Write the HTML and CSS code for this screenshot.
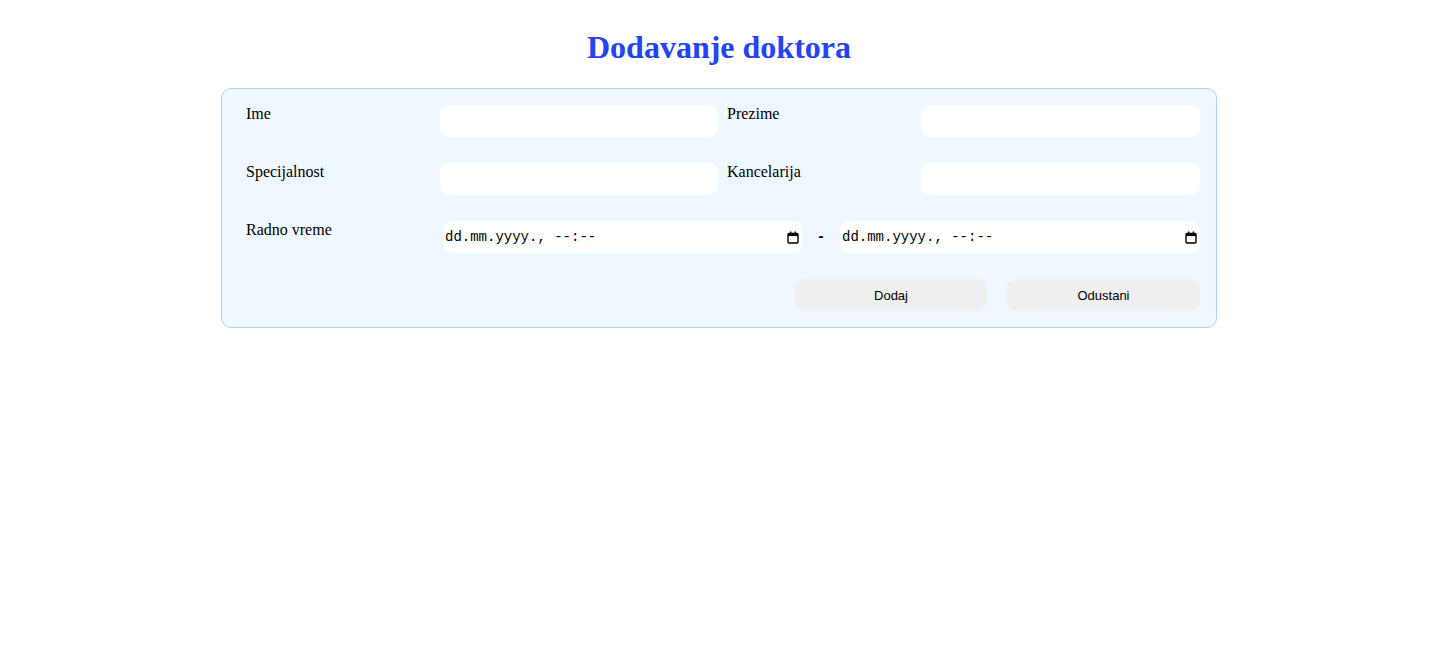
FILE: index.html
```html
<!DOCTYPE html>
<html lang="sr">
<head>
<meta charset="utf-8">
<title>Dodavanje doktora</title>
<link rel="stylesheet" href="styles.css">
</head>
<body>
<h1 class="title">Dodavanje doktora</h1>
<form class="card">
  <div class="grid">
    <label class="lbl" for="ime">Ime</label>
    <input class="field" id="ime" type="text">
    <label class="lbl" for="prezime">Prezime</label>
    <input class="field" id="prezime" type="text">

    <label class="lbl" for="spec">Specijalnost</label>
    <input class="field" id="spec" type="text">
    <label class="lbl" for="kanc">Kancelarija</label>
    <input class="field" id="kanc" type="text">

    <span class="lbl">Radno vreme</span>
    <div class="range">
      <div class="dt dt-first">
        <span class="dt-text">dd.mm.yyyy., --:--</span>
        <svg class="cal" width="12" height="13" viewBox="0 0 12 13" aria-hidden="true">
          <rect x="1" y="2.5" width="10" height="9.5" rx="1" fill="none" stroke="#000" stroke-width="1.4"/>
          <rect x="1" y="2.5" width="10" height="2.6" fill="#000"/>
          <rect x="3" y="0.5" width="1.4" height="2.5" fill="#000"/>
          <rect x="7.6" y="0.5" width="1.4" height="2.5" fill="#000"/>
        </svg>
      </div>
      <span class="dash">-</span>
      <div class="dt dt-second">
        <span class="dt-text">dd.mm.yyyy., --:--</span>
        <svg class="cal" width="12" height="13" viewBox="0 0 12 13" aria-hidden="true">
          <rect x="1" y="2.5" width="10" height="9.5" rx="1" fill="none" stroke="#000" stroke-width="1.4"/>
          <rect x="1" y="2.5" width="10" height="2.6" fill="#000"/>
          <rect x="3" y="0.5" width="1.4" height="2.5" fill="#000"/>
          <rect x="7.6" y="0.5" width="1.4" height="2.5" fill="#000"/>
        </svg>
      </div>
    </div>

    <div class="actions">
      <button type="button" class="btn btn-add">Dodaj</button>
      <button type="button" class="btn btn-cancel">Odustani</button>
    </div>
  </div>
</form>
</body>
</html>
```
FILE: styles.css
```css
body {
  margin: 8px;
  background: #ffffff;
  font-family: "Liberation Serif", "Times New Roman", serif;
  font-size: 16px;
  color: #000;
}

.title {
  margin: 21px 0 22px;
  text-align: center;
  font-size: 32px;
  font-weight: bold;
  line-height: 37px;
  color: #2443f5;
}

.card {
  width: 996px;
  box-sizing: border-box;
  margin: 0 auto;
  padding: 16px 16px 16px 24px;
  background: #f0f8ff;
  border: 1px solid #a9d6e6;
  border-radius: 10px;
}

.grid {
  display: grid;
  grid-template-columns: 185px 278px 185px 279px;
  column-gap: 9px;
  row-gap: 26px;
  align-items: start;
}

.lbl {
  line-height: 18px;
}

.field {
  height: 32px;
  box-sizing: border-box;
  border: none;
  border-radius: 9px;
  background: #ffffff;
  outline: none;
  padding: 0 8px;
  font: inherit;
}

.range {
  grid-column: 2 / 5;
  display: flex;
  align-items: center;
  justify-content: space-between;
  padding-left: 3px;
}

.dt {
  height: 32px;
  box-sizing: border-box;
  background: #ffffff;
  border-radius: 9px;
  display: flex;
  align-items: center;
  justify-content: space-between;
  padding: 0 3px 0 2px;
}

.dt-first { width: 359px; }
.dt-second { width: 360px; }

.dt-text {
  font-family: "Liberation Mono", "Courier New", monospace;
  font-size: 14px;
  white-space: pre;
}

.cal { display: block; }

.dash {
  font-family: "Liberation Mono", "Courier New", monospace;
  font-weight: bold;
  font-size: 14px;
}

.actions {
  grid-column: 3 / 5;
  display: flex;
  justify-content: flex-end;
  gap: 20px;
}

.btn {
  height: 32px;
  border: none;
  border-radius: 9px;
  background: #efefef;
  font-family: "Liberation Sans", Arial, sans-serif;
  font-size: 13px;
  color: #000;
  padding: 0;
}

.btn-add { width: 192px; }
.btn-cancel { width: 193px; }
```
